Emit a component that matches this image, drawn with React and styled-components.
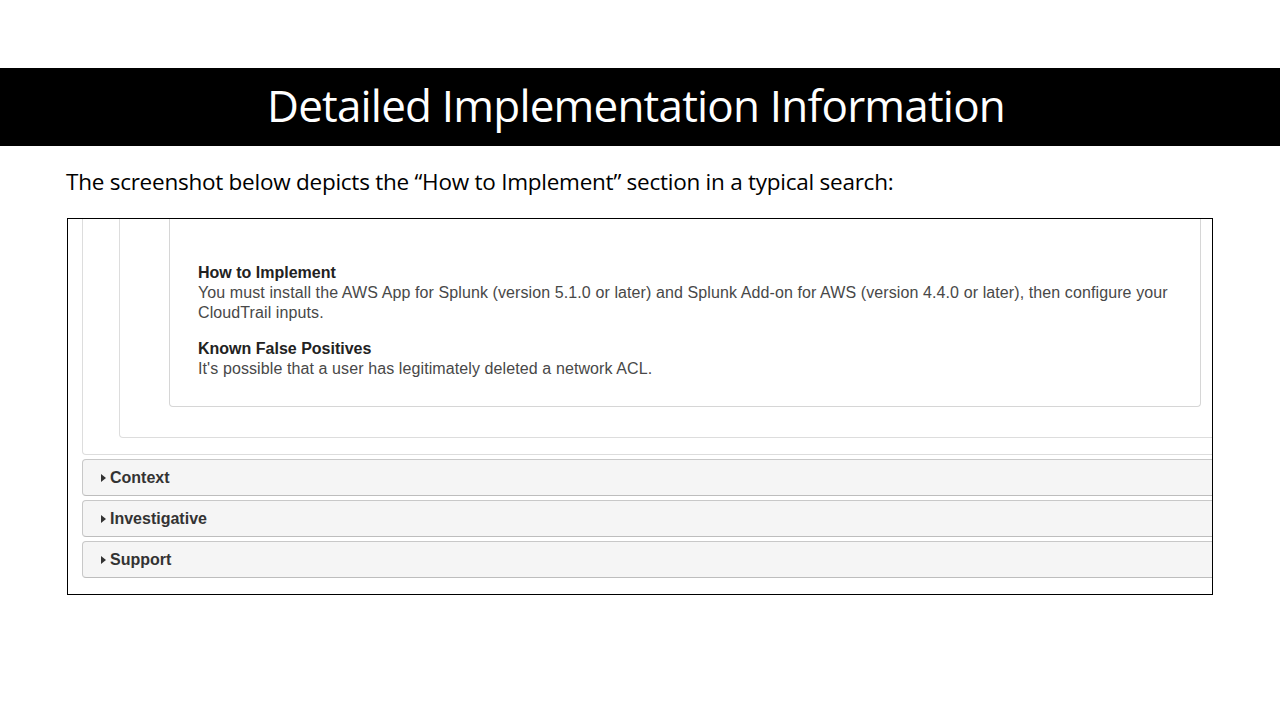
import React from 'react';
import styled, { createGlobalStyle } from 'styled-components';

const GlobalStyle = createGlobalStyle`
    html, body {
        margin: 0;
        padding: 0;
        background: #ffffff;
    }
    body {
        font-family: "Open Sans", "Liberation Sans", sans-serif;
    }
`;

const Slide = styled.div`
    width: 1280px;
    height: 720px;
    overflow: hidden;
    padding-top: 68px;
    box-sizing: border-box;
`;

const TitleBar = styled.div`
    height: 78px;
    background: #000000;
    display: flex;
    align-items: center;
    justify-content: center;
`;

const Title = styled.h1`
    margin: 0;
    font-family: "Open Sans", sans-serif;
    font-weight: 400;
    font-size: 44px;
    letter-spacing: -0.8px;
    color: #ffffff;
    line-height: 1;
    padding: 0 8px 4px 0;
`;

const Caption = styled.p`
    margin: 20px 0 0 66px;
    font-family: "Open Sans", sans-serif;
    font-size: 22.5px;
    letter-spacing: -0.25px;
    line-height: 32px;
    color: #000000;
`;

const Frame = styled.div`
    margin: 20px 0 0 67px;
    width: 1146px;
    height: 377px;
    box-sizing: border-box;
    border: 1px solid #000000;
    overflow: hidden;
    padding-left: 14px;
    font-family: "Liberation Sans", Arial, sans-serif;
`;

const Shot = styled.div`
    width: 1200px;
`;

const Panel = styled.div`
    border: 1px solid ${p => p.$border || '#dddddd'};
    border-top: none;
    border-radius: 0 0 4px 4px;
    background: #ffffff;
    padding: ${p => p.$pad};
    width: ${p => p.$width || 'auto'};
    box-sizing: border-box;
`;

const Heading = styled.div`
    font-weight: 700;
    font-size: 16px;
    line-height: 20px;
    color: #222222;
    margin-top: ${p => p.$gap || 0}px;
`;

const Body = styled.div`
    font-size: 16px;
    letter-spacing: 0.1px;
    line-height: 20px;
    color: #484848;
    width: 990px;
`;

const Accordion = styled.div`
    display: flex;
    flex-direction: column;
    gap: 4px;
    margin-top: 4px;
`;

const Row = styled.div`
    height: 37px;
    box-sizing: border-box;
    border: 1px solid #c8c8c8;
    border-bottom-color: #bdbdbd;
    border-radius: 4px;
    background: #f5f5f5;
    display: flex;
    align-items: center;
    padding-left: 18px;
    gap: 4px;
`;

const Caret = styled.span`
    width: 0;
    height: 0;
    border-top: 4px solid transparent;
    border-bottom: 4px solid transparent;
    border-left: 5px solid #333333;
    margin-top: 1px;
`;

const RowLabel = styled.span`
    font-weight: 700;
    font-size: 16px;
    color: #333333;
`;

const sections = ['Context', 'Investigative', 'Support'];

function App() {
    return (
        <Slide>
            <GlobalStyle />
            <TitleBar>
                <Title>Detailed Implementation Information</Title>
            </TitleBar>
            <Caption>The screenshot below depicts the “How to Implement” section in a typical search:</Caption>
            <Frame>
                <Shot>
                    <Panel $pad="0 0 16px 36px">
                        <Panel $pad="0 0 30px 49px">
                            <Panel $pad="44px 0 27px 28px" $width="1032px" $border="#d6d6d6">
                                <Heading>How to Implement</Heading>
                                <Body>
                                    You must install the AWS App for Splunk (version 5.1.0 or later) and Splunk Add-on for AWS (version 4.4.0 or later), then configure your CloudTrail inputs.
                                </Body>
                                <Heading $gap={16}>Known False Positives</Heading>
                                <Body>It's possible that a user has legitimately deleted a network ACL.</Body>
                            </Panel>
                        </Panel>
                    </Panel>
                    <Accordion>
                        {sections.map(name => (
                            <Row key={name}>
                                <Caret />
                                <RowLabel>{name}</RowLabel>
                            </Row>
                        ))}
                    </Accordion>
                </Shot>
            </Frame>
        </Slide>
    );
}

export default App;
